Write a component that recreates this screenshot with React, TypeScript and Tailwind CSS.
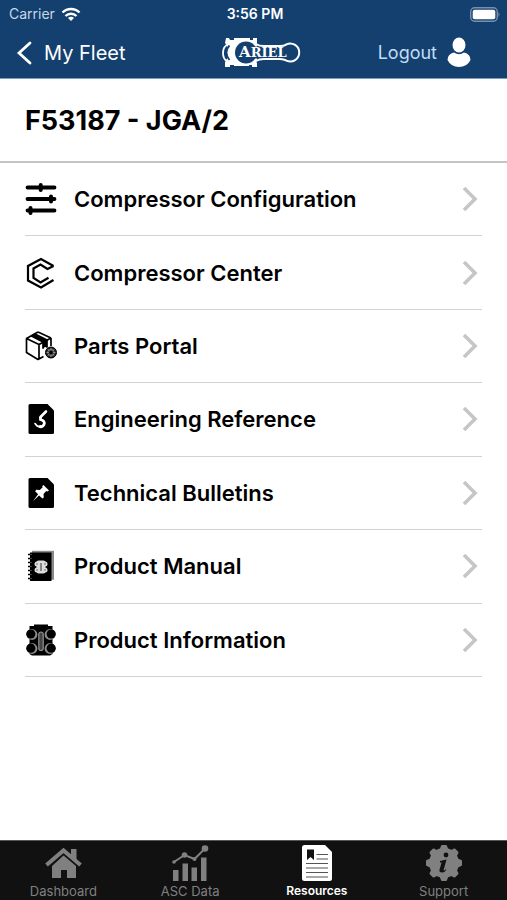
import type { ReactNode } from "react";

const icon = "h-8 w-8 shrink-0";

function SlidersIcon() {
  return (
    <svg viewBox="0 0 32 32" className={icon} fill="none" stroke="#000" strokeWidth="3.8" strokeLinecap="round">
      <path d="M2.5 4.5h27M2.5 16h27M2.5 27.5h27" />
      <path d="M15.7 2v5M26 13.500v5M5.500 25v5" strokeWidth="4" />
    </svg>
  );
}

function HexIcon() {
  return (
    <svg viewBox="0 0 32 32" className={icon} fill="none" stroke="#000" strokeWidth="2.2" strokeLinejoin="miter">
      <path d="M28.500 9 16 2 3 9v14.500l13 7 12.500-7.500" />
      <path d="M28.500 9 22.500 12 15.500 7.500 8.500 11.500v9.500l7 4.500 8-4.800" />
    </svg>
  );
}

function PartsIcon() {
  return (
    <svg viewBox="0 0 32 32" className={icon} fill="none" stroke="#000" strokeWidth="1.700" strokeLinejoin="round">
      <path d="M13 2 1.500 8.500v14L13 29.500l5.500-3M1.500 8.500 14 14.500l12-6.500M14 14.500V29M26 8v8M26 8 13 2" />
      <path d="M6.500 6 10 4l12 6v7l-2.500-1.500-1.500 2.500v-6z" fill="#000" />
      <circle cx="26" cy="22.500" r="5.500" fill="#222" strokeWidth="1" />
      <path d="M26 18v9M21.500 22.500h9M22.800 19.300l6.400 6.400M29.200 19.300l-6.400 6.400" stroke="#ddd" strokeWidth=".5" />
      <circle cx="26" cy="22.500" r="3.300" stroke="#bbb" strokeWidth=".5" />
      <circle cx="26" cy="22.500" r="1" fill="#000" />
    </svg>
  );
}

function HookFileIcon() {
  return (
    <svg viewBox="0 0 32 32" className={icon}>
      <path d="M5 1h17.500l6.500 6.500v22q0 1.500-1.500 1.500H5q-1.500 0-1.500-1.500v-27Q3.500 1 5 1z" />
      <path d="M21 8.500 15.500 14" fill="none" stroke="#fff" strokeWidth="2.600" strokeLinecap="round" />
      <path d="M15.500 14v2.500q5 1.500 3.500 5-2 3.500-5 1.500" fill="none" stroke="#fff" strokeWidth="2.800" />
      <path d="M16 23.500q-3.500 1-6-3" fill="none" stroke="#fff" strokeWidth="1.600" strokeLinecap="round" />
    </svg>
  );
}

function PinFileIcon() {
  return (
    <svg viewBox="0 0 32 32" className={icon}>
      <path d="M5 1h17.500l6.500 6.500v22q0 1.500-1.500 1.500H5q-1.500 0-1.500-1.500v-27Q3.500 1 5 1z" />
      <path d="m18.500 8 5.500 5.500-1.500 1-1.200-.4-2.800 3 .3 3.500-1.500 1-3.200-3.200-6 5.600 5-6.700-3-3 1.200-1.500 3.500.3 2.900-2.900-.6-1z" fill="#fff" />
    </svg>
  );
}

function ManualIcon() {
  return (
    <svg viewBox="0 0 32 32" className={icon}>
      <path d="M7 .8h22v29H7z" fill="#8a8a8a" />
      <path d="M5 2.500h21.500V31H5z" />
      <path d="M3 4.500h4M3 8.500h4M3 12.500h4M3 16.500h4M3 20.500h4M3 24.500h4M3 28.500h4" stroke="#000" strokeWidth="1.600" />
      <path d="M5.500 4.500h1M5.500 8.500h1M5.500 12.500h1M5.500 16.500h1M5.500 20.500h1M5.500 24.500h1M5.500 28.500h1" stroke="#aaa" strokeWidth=".8" />
      <rect x="11.500" y="10.500" width="9" height="13" rx="2" fill="#ddd" />
      <g fill="#ddd">
        <circle cx="12" cy="14" r="2.500" />
        <circle cx="20" cy="14" r="2.500" />
        <circle cx="12" cy="20" r="2.500" />
        <circle cx="20" cy="20" r="2.500" />
      </g>
      <path d="M16 13v8" stroke="#333" />
      <path d="M12 13v2M20 13v2M12 19v2M20 19v2" stroke="#777" />
    </svg>
  );
}

function CompressorIcon() {
  return (
    <svg viewBox="0 0 32 32" className={icon}>
      <path d="M9 .5h14V2h4.500v28L25 31.500H7L4.500 30V2H9z" />
      <g fill="#8c8c8c">
        <circle cx="7" cy="10.500" r="5.400" />
        <circle cx="25" cy="10.500" r="5.400" />
        <circle cx="7" cy="24.500" r="5.400" />
        <circle cx="25" cy="24.500" r="5.400" />
      </g>
      <circle cx="5.800" cy="10" r="4.600" />
      <circle cx="26.200" cy="10" r="4.600" />
      <circle cx="5.800" cy="24.200" r="4.600" />
      <circle cx="26.200" cy="24.200" r="4.600" />
      <rect x="13.800" y="8" width="4.400" height="18.500" rx="2.200" fill="#444" stroke="#909090" strokeWidth="1.200" />
    </svg>
  );
}

function ArielLogo() {
  return (
    <svg viewBox="0 0 80 32" className="h-8 w-20" role="img" aria-label="Ariel">
      <path d="M4 1h3l1 2h4V1h16v2h3V1h4v5l-2 3 3 3v9l-3 2 2 3v4h-5v-2h-3v1H12v-1H8v2H3v-5l2-3V9L3 6z" fill="#fff" />
      <path d="M5 8Q1 10 1 16t4 8" fill="none" stroke="#fff" strokeWidth="1.800" />
      <path d="M7.500 8.500q-3 3-3 7t3 7.500" fill="none" stroke="#14406f" strokeWidth="1.800" />
      <circle cx="24" cy="15.500" r="11" fill="#14406f" />
      <path d="M34 7q3 2 8 2h16q4 0 6.500-1.700a9 9 0 1 1 0 16.400Q62 22 58 22H42q-5 0-8 2z" fill="#14406f" stroke="#fff" strokeWidth="2" />
      <path d="M33 9.500v12" stroke="#14406f" strokeWidth="6" />
      <text x="17" y="20" fill="#fff" fontFamily="DejaVu Serif, serif" fontWeight="700" fontSize="15">
        A<tspan fontSize="13">RIEL</tspan>
      </text>
    </svg>
  );
}

const rows: { label: string; icon: ReactNode }[] = [
  { label: "Compressor Configuration", icon: <SlidersIcon /> },
  { label: "Compressor Center", icon: <HexIcon /> },
  { label: "Parts Portal", icon: <PartsIcon /> },
  { label: "Engineering Reference", icon: <HookFileIcon /> },
  { label: "Technical Bulletins", icon: <PinFileIcon /> },
  { label: "Product Manual", icon: <ManualIcon /> },
  { label: "Product Information", icon: <CompressorIcon /> },
];

const tabIcon = "h-10 w-10";

function HomeIcon() {
  return (
    <svg viewBox="0 0 40 40" className={tabIcon}>
      <path d="M3.500 22 20.500 7.500l17 14.500" fill="none" stroke="currentColor" strokeWidth="4" />
      <path d="M28 6h5.500v11L28 12.500zM9 23 20.500 12.500 33 23v12h-9v-8h-6v8H9z" fill="currentColor" />
    </svg>
  );
}

function ChartIcon() {
  return (
    <svg viewBox="0 0 40 40" className={tabIcon} fill="currentColor">
      <path d="M3 27h5.500v11H3zM12.500 20.500H18V38h-5.500zM21.500 24.500H27V38h-5.500zM31 14.500h5.500V38H31z" />
      <path d="m4 19 10.500-7 10 4L35 5.500" fill="none" stroke="currentColor" strokeWidth="2" />
      <circle cx="4" cy="19" r="1.800" />
      <circle cx="14.500" cy="12" r="2.800" />
      <circle cx="24.500" cy="16" r="2" />
      <circle cx="35" cy="5.500" r="3.300" />
    </svg>
  );
}

function DocIcon() {
  return (
    <svg viewBox="0 0 40 40" className={tabIcon}>
      <path d="M7.500 2H28l7 7v26.500q0 2.500-2.500 2.500h-25Q5 38 5 35.500v-31Q5 2 7.500 2z" fill="currentColor" />
      <path d="M10 6.500h7V17l-3.500-3L10 17z" fill="#111" />
      <path d="M19.500 11.500H31M19.500 16H31M9 20.500h22M9 25h22M9 29.500h22M9 34h22" stroke="#555" strokeWidth="1.200" />
    </svg>
  );
}

function InfoIcon() {
  return (
    <svg viewBox="0 0 40 40" className={tabIcon}>
      <g fill="currentColor">
        <circle cx="20" cy="20" r="15" />
        <g stroke="currentColor" strokeWidth="2" strokeLinejoin="round">
          <path d="M18 3h4l2 5h-8zM18 37h4l2-5h-8zM3 18v4l5 2v-8zM37 18v4l-5 2v-8z" />
          <path d="m6.500 9.500 3-3 5 2.500-5.500 5.500zM33.500 9.500l-3-3-5 2.500 5.500 5.500zM6.500 30.500l3 3 5-2.500-5.500-5.500zM33.500 30.500l-3 3-5-2.500 5.500-5.500z" />
        </g>
      </g>
      <circle cx="22" cy="12" r="2.400" fill="#111" />
      <path d="m16 18 6.500-1.500-3 11q1.500.2 3-1.700-.8 3.700-4.500 3.700-3.300 0-2.400-3.200l2-6.800H16z" fill="#111" />
    </svg>
  );
}

const tabs: { label: string; icon: ReactNode; active?: boolean }[] = [
  { label: "Dashboard", icon: <HomeIcon /> },
  { label: "ASC Data", icon: <ChartIcon /> },
  { label: "Resources", icon: <DocIcon />, active: true },
  { label: "Support", icon: <InfoIcon /> },
];

export default function App() {
  return (
    <div className="flex min-h-screen flex-col bg-white font-['Inter',sans-serif] text-black">
      <header className="border-b border-[#7e9cbd] bg-[#14406f] text-white">
        <div className="grid h-7 grid-cols-3 items-center pr-1.5 pl-[9px] text-sm">
          <div className="flex items-center gap-1.5 text-[#c8d7e8]">
            <span>Carrier</span>
            <svg viewBox="0 0 20 15" className="h-[15px] w-5" fill="none" stroke="#fff" strokeWidth="2.400">
              <path d="M1.500 5.500a12 12 0 0 1 17 0M4.500 9a8 8 0 0 1 11 0" />
              <path d="m10 14-3-3a4.200 4.200 0 0 1 6 0z" fill="#fff" stroke="none" />
            </svg>
          </div>
          <span className="text-center font-semibold">3:56 PM</span>
          <svg viewBox="0 0 31 15" className="h-[15px] w-[31px] justify-self-end">
            <rect x=".7" y=".7" width="26.600" height="13.600" rx="4" fill="none" stroke="#7890ad" strokeWidth="1.400" />
            <rect x="2.700" y="2.700" width="22.600" height="9.600" rx="2" fill="#fff" />
            <path d="M28.500 5q2 2.500 0 5z" fill="#7890ad" />
          </svg>
        </div>
        <div className="grid h-[50px] grid-cols-[1fr_auto_1fr] items-center pl-4">
          <button type="button" className="flex items-center gap-3 text-xl">
            <svg viewBox="0 0 16 24" className="h-6 w-4" fill="none" stroke="#fff" strokeWidth="2.800" strokeLinecap="round">
              <path d="M14 2 3 12l11 10" />
            </svg>
            My Fleet
          </button>
          <ArielLogo />
          <button type="button" className="mr-9 flex items-center gap-2.5 justify-self-end text-lg text-[#c2dcf5]">
            Logout
            <svg viewBox="0 0 24 32" className="h-8 w-6" fill="#fff">
              <ellipse cx="12" cy="8" rx="6.500" ry="7.500" />
              <path d="M.5 23q0-6 6.500-7.500 5 3.500 10 0 6.500 1.500 6.500 7.500-3.500 7-11.500 7T.5 23z" />
            </svg>
          </button>
        </div>
      </header>

      <h1 className="border-b-2 border-[#c4c4c4] px-[25px] pt-[25px] pb-[23px] text-[27px] leading-[34px] font-bold">
        F53187 - JGA/2
      </h1>

      <main className="flex-1">
        <ul className="mx-[25px] grid min-h-[514px] auto-rows-fr">
          {rows.map((row) => (
            <li key={row.label} className="border-b border-[#d2d2d2]">
              <a href="#" className="flex h-full items-center">
                {row.icon}
                <span className="ml-[17px] flex-1 text-[22px] leading-7 font-semibold">{row.label}</span>
                <svg viewBox="0 0 16 26" className="mr-1 h-[26px] w-4" fill="none" stroke="#c6c6c6" strokeWidth="3.600">
                  <path d="m2 2 11 11L2 24" />
                </svg>
              </a>
            </li>
          ))}
        </ul>
      </main>

      <nav className="grid h-[60px] grid-cols-4 border-t border-[#555] bg-[#111]">
        {tabs.map((tab) => (
          <button
            key={tab.label}
            type="button"
            aria-current={tab.active ? "page" : undefined}
            className={
              tab.active
                ? "flex flex-col items-center pt-0.5 text-white"
                : "flex flex-col items-center pt-0.5 text-[#808080]"
            }
          >
            {tab.icon}
            <span className={tab.active ? "text-xs leading-4 font-semibold" : "text-[13px] leading-4"}>{tab.label}</span>
          </button>
        ))}
      </nav>
    </div>
  );
}
